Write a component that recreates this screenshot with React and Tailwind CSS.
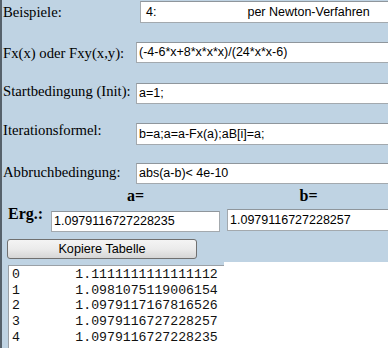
import React from 'react';

const rows = [
  { label: 'Fx(x) oder Fxy(x,y):', value: '(-4-6*x+8*x*x*x)/(24*x*x-6)', row: 'mt-[19px] h-[21px]', lab: 'mt-[2px]' },
  { label: 'Startbedingung (Init):', value: 'a=1;', row: 'mt-[20px] h-[21px]', lab: '-mt-px' },
  { label: 'Iterationsformel:', value: 'b=a;a=a-Fx(a);aB[i]=a;', row: 'mt-[19px] h-[22px]', lab: '-mt-[2px]' },
  { label: 'Abbruchbedingung:', value: 'abs(a-b)< 4e-10', row: 'mt-[18px] h-[21px]', lab: 'mt-0' },
];

const table = [
  ['0', '1.1111111111111112'],
  ['1', '1.0981075119006154'],
  ['2', '1.0979117167816526'],
  ['3', '1.0979116727228257'],
  ['4', '1.0979116727228235'],
];

function Field({ children, className = '' }) {
  return (
    <div className={`flex items-center bg-white border border-[#a3a9ae] border-t-[#8f969c] font-['Liberation_Sans',Arial,sans-serif] text-[12.5px] text-black whitespace-pre ${className}`}>
      {children}
    </div>
  );
}

export default function App() {
  return (
    <div className="w-[388px] h-[348px] overflow-hidden flex bg-[#bfd3e3] border-l-2 border-[#56616b] font-['Liberation_Serif','Times_New_Roman',serif] text-black">
      <div className="flex flex-col flex-1 min-w-0">
        {/* Beispiele */}
        <div className="mt-px h-[22px] flex items-start">
          <div className="w-[138px] shrink-0 pl-px mt-[2px] text-[14.7px] leading-[18px]">Beispiele:</div>
          <Field className="h-full flex-1 pl-[5px] -mr-[4px]">
            <span>4:</span>
            <span className="ml-[91px]">per Newton-Verfahren</span>
          </Field>
        </div>

        {rows.map(r => (
          <div key={r.label} className={`${r.row} flex items-start`}>
            <div className={`w-[134px] shrink-0 pl-px ${r.lab} text-[14.7px] leading-[18px] whitespace-nowrap`}>{r.label}</div>
            <Field className="h-full flex-1 pl-[2px] -mr-[4px]">{r.value}</Field>
          </div>
        ))}

        {/* a= / b= */}
        <div className="mt-[3px] h-[18px] flex text-[16px] leading-[18px] font-bold">
          <div className="w-[49px] shrink-0" />
          <div className="w-[169px] shrink-0 text-center">a=</div>
          <div className="w-[7px] shrink-0" />
          <div className="w-[163px] shrink-0 text-center">b=</div>
        </div>

        {/* Ergebnis */}
        <div className="h-[27px] flex items-start">
          <div className="w-[49px] shrink-0 pl-[6px] text-[16px] leading-[18px] font-bold">Erg.:</div>
          <Field className="mt-[6px] h-[21px] w-[169px] shrink-0 pl-[2px]">1.0979116727228235</Field>
          <div className="w-[7px] shrink-0" />
          <Field className="mt-[4px] h-[22px] w-[165px] shrink-0 pl-[2px]">1.0979116727228257</Field>
        </div>

        <button className="mt-[7px] ml-[5px] w-[190px] h-[20px] shrink-0 rounded-[3px] border border-[#707070] bg-gradient-to-b from-[#f4f4f4] via-[#ebebeb] to-[#d6d6d6] font-['Liberation_Sans',Arial,sans-serif] text-[12.7px] leading-[18px] text-black">
          Kopiere Tabelle
        </button>

        {/* Tabelle */}
        <div className="mt-[3px] flex-1 flex">
          <div className="w-[6px] shrink-0" />
          <div className="mt-[3px] w-[216px] shrink-0 bg-white border-t border-l border-[#9aa0a6] pl-[3px] pt-[1px] font-['Liberation_Mono','Courier_New',monospace] text-[13.2px] leading-[15.7px] text-[#111] whitespace-pre">
            {table.map(([i, v]) => (
              <div key={i}>{i + '       ' + v}</div>
            ))}
          </div>
          <div className="flex-1 bg-white" />
        </div>
      </div>
    </div>
  );
}
